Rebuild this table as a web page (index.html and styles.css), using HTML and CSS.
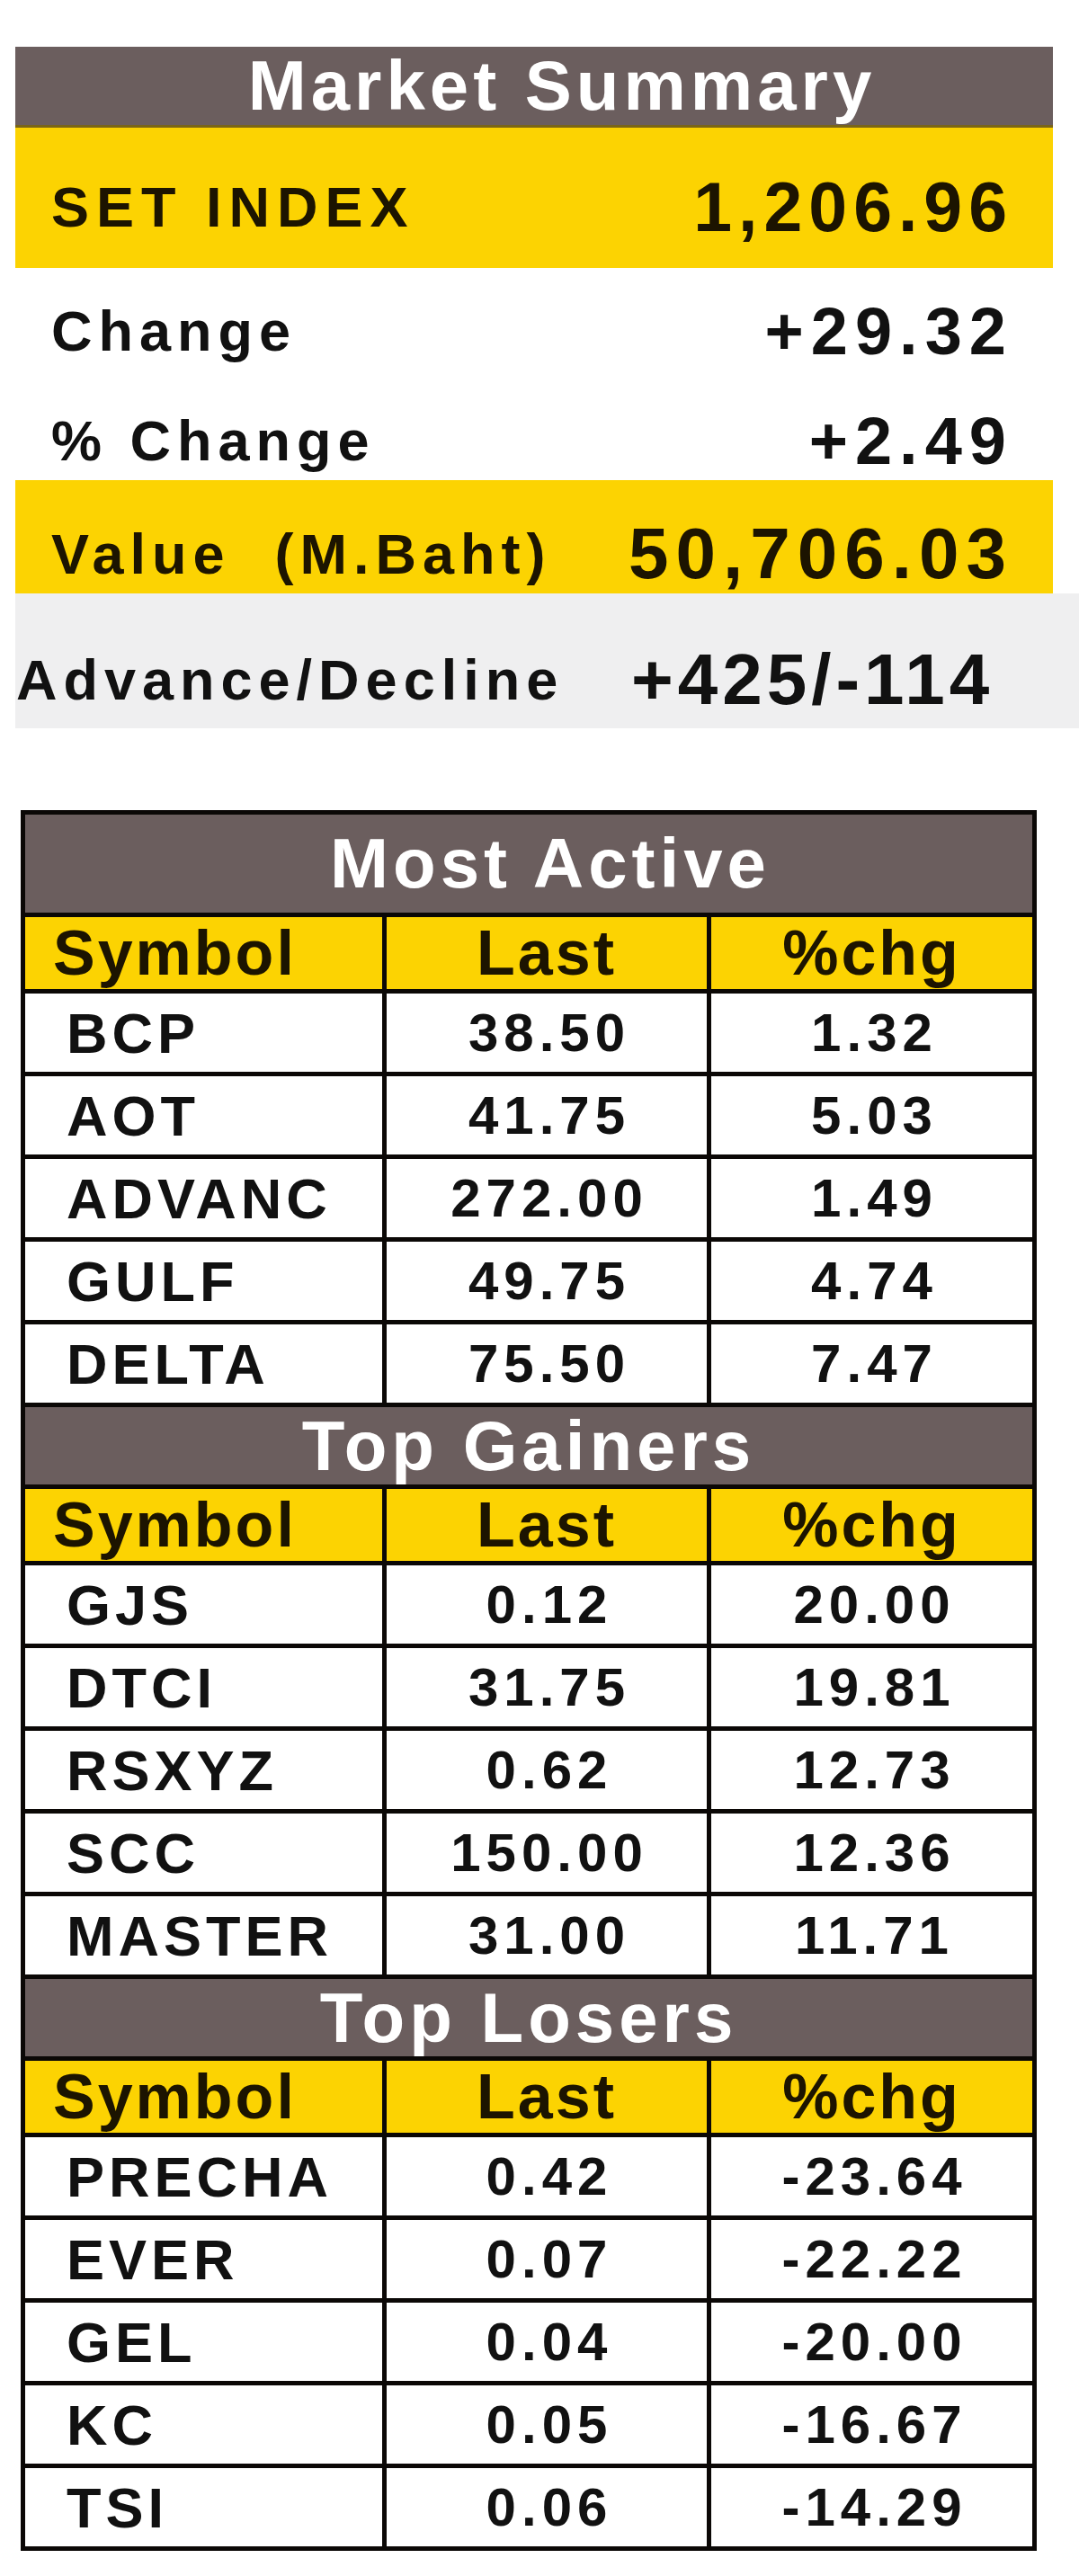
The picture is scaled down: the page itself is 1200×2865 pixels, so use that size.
FILE: index.html
```html
<!DOCTYPE html>
<html lang="en">
<head>
<meta charset="utf-8">
<title>Market Summary</title>
<link rel="stylesheet" href="styles.css">
</head>
<body>
<main class="page">
  <section class="summary">
    <div class="sum-title">Market Summary</div>
    <div class="sum-row hl set-row">
      <span class="lbl set-lbl">SET INDEX</span>
      <span class="val idx">1,206.96</span>
    </div>
    <div class="sum-plain">
      <div class="sum-line">
        <span class="lbl">Change</span>
        <span class="val">+29.32</span>
      </div>
      <div class="sum-line">
        <span class="lbl">% Change</span>
        <span class="val">+2.49</span>
      </div>
    </div>
    <div class="sum-row hl value-row">
      <span class="lbl">Value&nbsp; (M.Baht)</span>
      <span class="val big">50,706.03</span>
    </div>
    <div class="adv-row">
      <span class="lbl">Advance/Decline</span>
      <span class="val adv">+425/-114</span>
    </div>
  </section>

  <section class="board">
    <div class="sec-title first"><span>Most Active</span></div>
    <div class="col-head sym">Symbol</div>
    <div class="col-head">Last</div>
    <div class="col-head">%chg</div>
    <div class="cell sym">BCP</div><div class="cell num">38.50</div><div class="cell num">1.32</div>
    <div class="cell sym">AOT</div><div class="cell num">41.75</div><div class="cell num">5.03</div>
    <div class="cell sym">ADVANC</div><div class="cell num">272.00</div><div class="cell num">1.49</div>
    <div class="cell sym">GULF</div><div class="cell num">49.75</div><div class="cell num">4.74</div>
    <div class="cell sym">DELTA</div><div class="cell num">75.50</div><div class="cell num">7.47</div>

    <div class="sec-title"><span>Top Gainers</span></div>
    <div class="col-head sym">Symbol</div>
    <div class="col-head">Last</div>
    <div class="col-head">%chg</div>
    <div class="cell sym">GJS</div><div class="cell num">0.12</div><div class="cell num">20.00</div>
    <div class="cell sym">DTCI</div><div class="cell num">31.75</div><div class="cell num">19.81</div>
    <div class="cell sym">RSXYZ</div><div class="cell num">0.62</div><div class="cell num">12.73</div>
    <div class="cell sym">SCC</div><div class="cell num">150.00</div><div class="cell num">12.36</div>
    <div class="cell sym">MASTER</div><div class="cell num">31.00</div><div class="cell num">11.71</div>

    <div class="sec-title"><span>Top Losers</span></div>
    <div class="col-head sym">Symbol</div>
    <div class="col-head">Last</div>
    <div class="col-head">%chg</div>
    <div class="cell sym">PRECHA</div><div class="cell num">0.42</div><div class="cell num">-23.64</div>
    <div class="cell sym">EVER</div><div class="cell num">0.07</div><div class="cell num">-22.22</div>
    <div class="cell sym">GEL</div><div class="cell num">0.04</div><div class="cell num">-20.00</div>
    <div class="cell sym">KC</div><div class="cell num">0.05</div><div class="cell num">-16.67</div>
    <div class="cell sym">TSI</div><div class="cell num">0.06</div><div class="cell num">-14.29</div>
  </section>
</main>
</body>
</html>
```

FILE: styles.css
```css
* {
  box-sizing: border-box;
}

html, body {
  margin: 0;
  padding: 0;
  background: #ffffff;
}

body {
  font-family: "Liberation Sans", Arial, sans-serif;
  font-weight: 700;
  color: #111111;
}

.page {
  width: 1200px;
  min-height: 2865px;
  padding-top: 52px;
}

/* ---------- Market summary ---------- */
.summary {
  margin-left: 17px;
  width: 1183px;
}

.sum-title {
  width: 1154px;
  height: 90px;
  background: #6b5e5e;
  border-bottom: 3px solid #7a6518;
  color: #ffffff;
  font-size: 78px;
  letter-spacing: 5px;
  display: flex;
  align-items: center;
  justify-content: center;
  padding-left: 62px;
  white-space: nowrap;
}

.sum-row {
  display: flex;
  align-items: center;
  justify-content: space-between;
  white-space: nowrap;
}

.hl {
  width: 1154px;
  background: #fcd302;
  color: #1c1400;
  padding-left: 40px;
  padding-right: 44px;
}

.set-row {
  height: 156px;
  padding-top: 20px;
}

.value-row {
  height: 126px;
  padding-top: 38px;
}

.sum-plain {
  width: 1154px;
  height: 236px;
  padding: 40px 44px 0 40px;
  display: flex;
  flex-direction: column;
  gap: 62px;
}

.sum-line {
  height: 60px;
  display: flex;
  align-items: center;
  justify-content: space-between;
  white-space: nowrap;
}

.lbl {
  font-size: 63px;
  letter-spacing: 7px;
}

.lbl.set-lbl {
  letter-spacing: 8px;
}

.val {
  font-size: 74px;
  letter-spacing: 8px;
}

.val.idx {
  font-size: 77px;
  letter-spacing: 7px;
}

.val.big {
  font-size: 80px;
  letter-spacing: 8px;
}

.adv-row {
  height: 150px;
  background: #efeff0;
  padding-top: 42px;
  padding-left: 1px;
  display: grid;
  grid-template-columns: 684px 1fr;
  align-items: center;
  white-space: nowrap;
}

.val.adv {
  font-size: 80px;
  letter-spacing: 5px;
}

/* ---------- Tables ---------- */
.board {
  margin: 91px 0 0 23px;
  width: 1130px;
  display: grid;
  grid-template-columns: 397px 356px 357px;
  gap: 5px;
  padding: 5px;
  background: #0b0806;
}

.sec-title {
  grid-column: 1 / -1;
  height: 86px;
  background: #6b5e5e;
  color: #ffffff;
  font-size: 78px;
  letter-spacing: 5px;
  display: flex;
  align-items: center;
  justify-content: center;
  white-space: nowrap;
}

.sec-title.first {
  height: 109px;
  padding-left: 48px;
}

.col-head {
  height: 80px;
  background: #fcd302;
  color: #1c1400;
  font-size: 70px;
  letter-spacing: 3px;
  display: flex;
  align-items: center;
  justify-content: center;
  white-space: nowrap;
}

.col-head.sym {
  justify-content: flex-start;
  padding-left: 31px;
}

.cell {
  height: 87px;
  background: #ffffff;
  display: flex;
  align-items: center;
  white-space: nowrap;
}

.cell.sym {
  padding-left: 46px;
  font-size: 63px;
  letter-spacing: 5px;
}

.cell.num {
  justify-content: center;
  font-size: 60px;
  letter-spacing: 6px;
  padding-left: 6px;
}
```
